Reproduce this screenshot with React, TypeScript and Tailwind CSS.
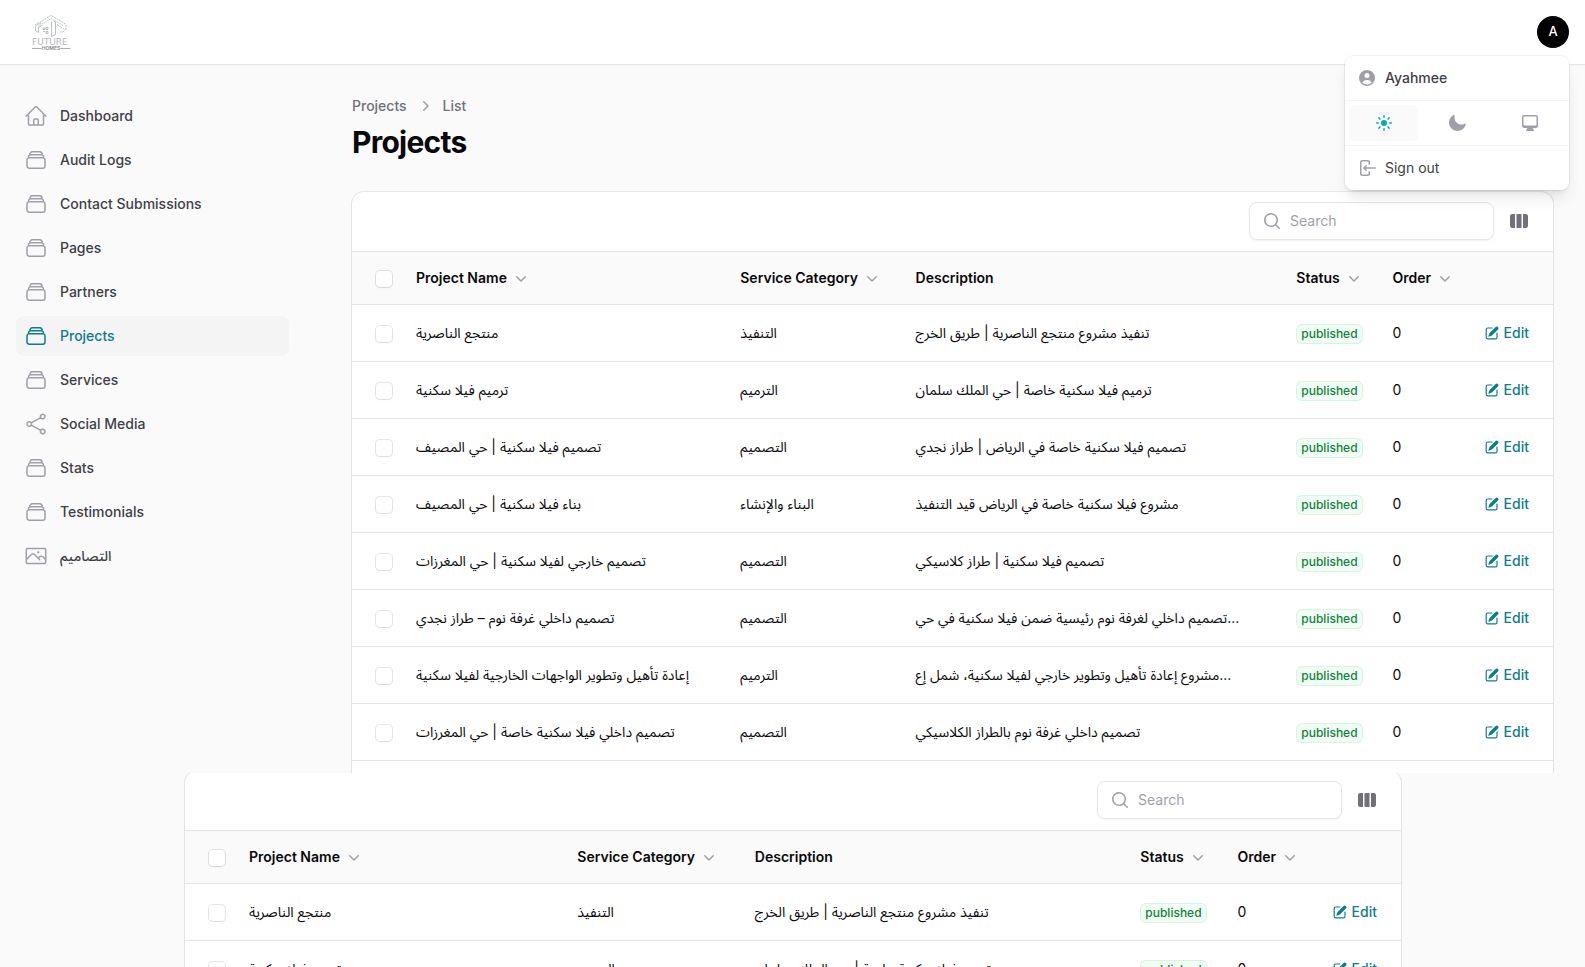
import {
  HiMiniArrowLeftOnRectangle,
  HiMiniChevronDown,
  HiMiniChevronRight,
  HiMiniComputerDesktop,
  HiMiniMagnifyingGlass,
  HiMiniMoon,
  HiMiniPencilSquare,
  HiMiniSun,
  HiMiniUserCircle,
  HiMiniViewColumns,
  HiOutlineHome,
  HiOutlinePhoto,
  HiOutlineRectangleStack,
  HiOutlineShare,
} from 'react-icons/hi2'

const navItems = [
  { label: 'Dashboard', icon: HiOutlineHome },
  { label: 'Audit Logs', icon: HiOutlineRectangleStack },
  { label: 'Contact Submissions', icon: HiOutlineRectangleStack },
  { label: 'Pages', icon: HiOutlineRectangleStack },
  { label: 'Partners', icon: HiOutlineRectangleStack },
  { label: 'Projects', icon: HiOutlineRectangleStack, active: true },
  { label: 'Services', icon: HiOutlineRectangleStack },
  { label: 'Social Media', icon: HiOutlineShare },
  { label: 'Stats', icon: HiOutlineRectangleStack },
  { label: 'Testimonials', icon: HiOutlineRectangleStack },
  { label: 'التصاميم', icon: HiOutlinePhoto },
]

const projects = [
  { name: 'منتجع الناصرية', category: 'التنفيذ', description: 'تنفيذ مشروع منتجع الناصرية | طريق الخرج' },
  { name: 'ترميم فيلا سكنية', category: 'الترميم', description: 'ترميم فيلا سكنية خاصة | حي الملك سلمان' },
  { name: 'تصميم فيلا سكنية | حي المصيف', category: 'التصميم', description: 'تصميم فيلا سكنية خاصة في الرياض | طراز نجدي' },
  { name: 'بناء فيلا سكنية | حي المصيف', category: 'البناء والإنشاء', description: 'مشروع فيلا سكنية خاصة في الرياض قيد التنفيذ' },
  { name: 'تصميم خارجي لفيلا سكنية | حي المغرزات', category: 'التصميم', description: 'تصميم فيلا سكنية | طراز كلاسيكي' },
  { name: 'تصميم داخلي غرفة نوم – طراز نجدي', category: 'التصميم', description: 'تصميم داخلي لغرفة نوم رئيسية ضمن فيلا سكنية في حي...' },
  { name: 'إعادة تأهيل وتطوير الواجهات الخارجية لفيلا سكنية', category: 'الترميم', description: 'مشروع إعادة تأهيل وتطوير خارجي لفيلا سكنية، شمل إع...' },
  { name: 'تصميم داخلي فيلا سكنية خاصة | حي المغرزات', category: 'التصميم', description: 'تصميم داخلي غرفة نوم بالطراز الكلاسيكي' },
]

const columns = [
  { label: 'Project Name', width: 'w-[27%]', sortable: true },
  { label: 'Service Category', width: 'w-[14.6%]', sortable: true },
  { label: 'Description', width: 'w-[31.7%]', sortable: false },
  { label: 'Status', width: 'w-[8%]', sortable: true },
  { label: 'Order', width: '', sortable: true },
]

function Logo() {
  return (
    <svg className="h-10 w-12" viewBox="28 12 48 40" fill="none" stroke="#a9aeb0" role="img" aria-label="Future Homes">
      <g strokeWidth="0.8">
        <path d="M35 25 51 15.4l15.5 9.2" strokeDasharray="2 0.8" />
        <path d="M38 26.5 51 18.5l12 7" strokeDasharray="1.6 0.9" />
        <path d="M41 23.5c-4 .5-5.6 2-5.6 4.5v2.500l3 2v-5l4-2" />
        <path d="M43 28h2v1.500h-2zM46 27.500h2v2h-2zM43 31.500h2M46 31.500h2v2h-2z" />
        <path d="M51.500 21.500v15l4-2V22l-2-1" />
        <path d="M57 24.500l3 2M60 26.500l4 2.500M66 25v4l-3 3h-3" strokeDasharray="2.500 0.700" />
      </g>
      <path d="M32 48.500h9.500M60.500 48.500h10" strokeWidth="1.200" />
      <text x="32" y="45" fontSize="9" fill="#b4b8ba" stroke="none" className="font-['DejaVu_Sans',sans-serif]">
        FUTURE
      </text>
      <text x="51" y="50.300" fontSize="5" fontWeight="700" fill="#8f9496" stroke="none" textAnchor="middle">
        HOMES
      </text>
    </svg>
  )
}

function UserMenu() {
  return (
    <div className="absolute top-14 right-4 w-56 divide-y divide-zinc-100 rounded-lg bg-white text-sm font-medium text-zinc-700 shadow-lg ring-1 ring-zinc-950/5">
      <div className="flex items-center gap-2 p-3">
        <HiMiniUserCircle className="size-5 text-zinc-400" />
        Ayahmee
      </div>
      <div className="grid grid-cols-3 gap-1 p-1 text-zinc-400">
        <button aria-label="Light theme" className="flex justify-center rounded-md bg-zinc-50 p-2 text-[#06a9be]">
          <HiMiniSun className="size-5" />
        </button>
        <button aria-label="Dark theme" className="flex justify-center rounded-md p-2">
          <HiMiniMoon className="size-5" />
        </button>
        <button aria-label="System theme" className="flex justify-center rounded-md p-2">
          <HiMiniComputerDesktop className="size-5" />
        </button>
      </div>
      <div className="p-1">
        <button className="flex w-full items-center gap-2 rounded-md p-2 font-normal">
          <HiMiniArrowLeftOnRectangle className="size-5 text-zinc-400" />
          Sign out
        </button>
      </div>
    </div>
  )
}

function Checkbox({ label }: { label: string }) {
  return (
    <input
      type="checkbox"
      aria-label={label}
      className="mt-0.5 block size-4 appearance-none rounded bg-white shadow-xs ring-1 ring-zinc-950/10"
    />
  )
}

function ProjectsTable({ rows }: { rows: typeof projects }) {
  return (
    <div className="overflow-hidden rounded-xl bg-white shadow-xs ring-1 ring-zinc-950/8">
      <div className="flex items-center justify-end gap-[15px] px-6 pt-2.5 pb-[11px]">
        <label className="flex w-[245px] items-center gap-2 rounded-lg border border-zinc-950/10 px-3 py-2 shadow-xs">
          <HiMiniMagnifyingGlass className="size-5 text-zinc-400" />
          <input
            type="search"
            aria-label="Search"
            placeholder="Search"
            className="h-5 min-w-0 flex-1 text-sm outline-none placeholder:text-zinc-400"
          />
        </label>
        <button aria-label="Toggle columns" className="text-zinc-500">
          <HiMiniViewColumns className="size-5" />
        </button>
      </div>

      <table className="w-full table-fixed border-t border-zinc-200 text-left text-sm text-zinc-950">
        <thead className="bg-zinc-50">
          <tr className="h-[53px] border-b border-zinc-200">
            <th className="w-[52px] pl-6">
              <Checkbox label="Select all" />
            </th>
            {columns.map((column) => (
              <th key={column.label} className={`px-3 font-semibold ${column.width}`}>
                {column.sortable ? (
                  <button className="flex items-center gap-1 whitespace-nowrap">
                    {column.label}
                    <HiMiniChevronDown className="size-5 text-zinc-400" />
                  </button>
                ) : (
                  column.label
                )}
              </th>
            ))}
            <th aria-label="Actions" className="w-[8%]" />
          </tr>
        </thead>
        <tbody>
          {rows.map((project) => (
            <tr key={project.name} className="h-[57px] border-b border-zinc-200">
              <td className="pl-6">
                <Checkbox label={project.name} />
              </td>
              <td className="px-3 whitespace-nowrap">{project.name}</td>
              <td className="px-3 whitespace-nowrap">{project.category}</td>
              <td className="px-3 whitespace-nowrap">{project.description}</td>
              <td className="px-3 pt-0.5">
                <span className="flex w-max rounded-md bg-[#f0fdf4] px-[5px] py-0.5 text-xs font-medium text-[#15803d] ring-1 ring-green-600/10 ring-inset">
                  published
                </span>
              </td>
              <td className="px-3">0</td>
              <td className="pr-6">
                <a href="#" className="flex items-center justify-end gap-1 font-medium text-[#0f7c8a]">
                  <HiMiniPencilSquare className="size-4" />
                  Edit
                </a>
              </td>
            </tr>
          ))}
        </tbody>
      </table>
      <div className="h-14" />
    </div>
  )
}

export default function App() {
  return (
    <div className="flex h-screen flex-col overflow-hidden bg-zinc-50 font-[Inter,'Noto_Sans_Arabic','Noto_Sans','DejaVu_Sans',sans-serif]">
      <div className="min-h-0 flex-1 overflow-hidden">
        <header className="relative z-10 flex h-16 items-center justify-between bg-white pr-4 pl-7 shadow-xs ring-1 ring-zinc-950/5">
          <Logo />
          <button className="flex size-8 items-center justify-center rounded-full bg-black text-[13px] font-medium text-white">
            A
          </button>
          <UserMenu />
        </header>

        <div className="flex">
          <aside className="w-80 shrink-0 py-8 pr-[31px] pl-4">
            <nav className="flex flex-col gap-1">
              {navItems.map(({ label, icon: Icon, active }) => (
                <a
                  key={label}
                  href="#"
                  className={`flex items-center gap-3 rounded-lg p-2 text-sm font-medium ${
                    active ? 'bg-zinc-100 text-[#0f7c8a]' : 'text-zinc-700'
                  }`}
                >
                  <Icon className={`size-6 ${active ? '' : 'text-zinc-400'}`} />
                  {label}
                </a>
              ))}
            </nav>
          </aside>

          <main className="min-w-0 flex-1 px-8 py-8">
            <nav className="flex items-center gap-2 text-sm font-medium text-zinc-500">
              <a href="#">Projects</a>
              <HiMiniChevronRight className="size-5 text-zinc-400" />
              <a href="#">List</a>
            </nav>
            <h1 className="mt-2 mb-8 text-3xl font-bold tracking-tight text-zinc-950">Projects</h1>
            <ProjectsTable rows={projects} />
          </main>
        </div>
      </div>

      <div className="h-[194px] shrink-0 overflow-hidden pr-[184px] pl-[185px]">
        <div className="-mt-0.5">
          <ProjectsTable rows={projects.slice(0, 2)} />
        </div>
      </div>
    </div>
  )
}
